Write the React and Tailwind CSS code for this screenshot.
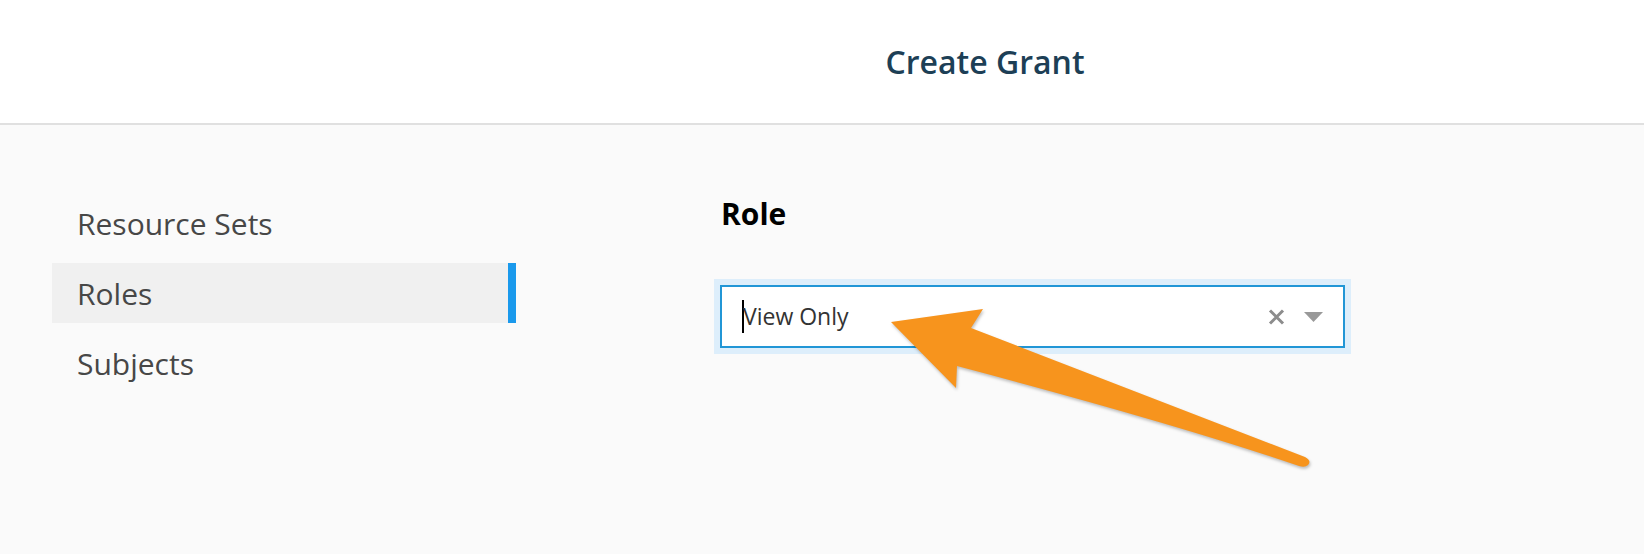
import React from "react";

export default function App() {
  return (
    <div
      className="relative w-full h-[554px] bg-[#fafafa] overflow-hidden"
      style={{ fontFamily: '"Open Sans", "Liberation Sans", sans-serif' }}
    >
      <header className="h-[125px] bg-white border-b-2 border-[#e0e0e0] flex items-center justify-center pl-[326px]">
        <h1 className="text-[32px] font-semibold text-[#1d3f56] leading-none">Create Grant</h1>
      </header>

      <div className="flex">
        <nav className="ml-[52px] mt-[68px] w-[464px] flex flex-col gap-[10px]">
          <div className="h-[60px] flex items-center pl-[25px] text-[30px] text-[#474747]">Resource Sets</div>
          <div className="h-[60px] flex items-center pl-[25px] text-[30px] text-[#474747] bg-[#f0f0f0] border-r-8 border-[#1a99ec]">
            Roles
          </div>
          <div className="h-[60px] flex items-center pl-[25px] text-[30px] text-[#474747]">Subjects</div>
        </nav>

        <main className="ml-[198px] mt-[69px] w-[637px]">
          <div className="pl-[7px] text-[30px] font-bold text-black leading-[39px]">Role</div>
          <div className="mt-[46px] p-[6px] bg-[#ddeefb]">
            <div className="h-[63px] border-2 border-[#2196d6] bg-white flex items-center pl-[20px] pr-[20px]">
              <span className="w-[2px] h-[33px] bg-black shrink-0" />
              <span className="ml-[-1px] text-[23px] text-[#333] leading-none">View Only</span>
              <div className="ml-auto flex items-center gap-[19px]">
                <svg width="17" height="16" viewBox="0 0 17 16">
                  <path d="M2 1.5 L15 14.5 M15 1.5 L2 14.5" stroke="#8c8c8c" strokeWidth="3" />
                </svg>
                <svg width="19" height="10" viewBox="0 0 19 10">
                  <path d="M0 0 H19 L9.5 10 Z" fill="#999" />
                </svg>
              </div>
            </div>
          </div>
        </main>
      </div>

      <svg
        className="absolute left-0 top-0 pointer-events-none"
        width="1644"
        height="554"
        viewBox="0 0 1644 554"
        style={{ filter: "drop-shadow(1px 2px 1.5px rgba(0,0,0,0.25))" }}
      >
        <path
          d="M891 322 L983 309 L971 328 L1305 457 Q1312 461 1308 465 Q1305 468 1299 466 Q1180 425 957 366 L956 388 Z"
          fill="#f7941d"
        />
      </svg>
    </div>
  );
}
